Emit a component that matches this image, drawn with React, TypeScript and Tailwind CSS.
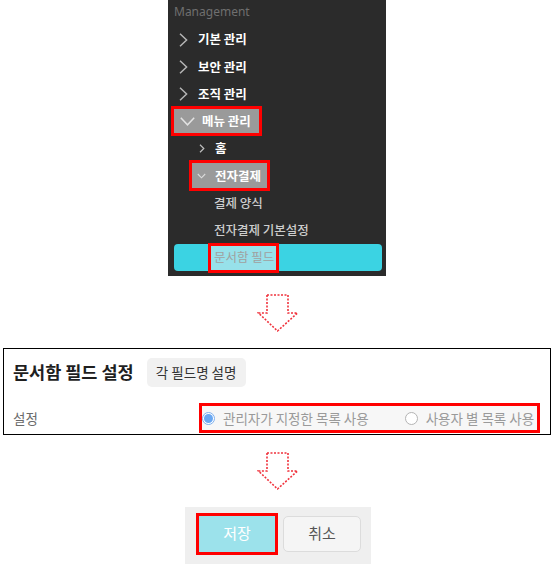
/*
 * 문서함 필드 설정 안내 — 메뉴 경로 → 설정 → 저장
 */

const KR = "font-['Noto_Sans_CJK_KR','Noto_Sans',sans-serif]";

function ChevRight({ small = false }: { small?: boolean }) {
  return small ? (
    <svg width="6" height="9" viewBox="0 0 6 9" className="block">
      <polyline points="1,0.8 4.8,4.5 1,8.2" fill="none" stroke="#bdbdbd" strokeWidth="1.2" />
    </svg>
  ) : (
    <svg width="9" height="14" viewBox="0 0 9 14" className="block">
      <polyline points="1,0.8 7.6,7 1,13.2" fill="none" stroke="#b5b5b5" strokeWidth="1.5" />
    </svg>
  );
}

function ChevDown({ small = false }: { small?: boolean }) {
  return small ? (
    <svg width="9" height="6" viewBox="0 0 9 6" className="block">
      <polyline points="0.8,1 4.5,4.8 8.2,1" fill="none" stroke="#dcdcdc" strokeWidth="1.1" />
    </svg>
  ) : (
    <svg width="15" height="9" viewBox="0 0 15 9" className="block">
      <polyline points="0.8,0.8 7.5,7.8 14.2,0.8" fill="none" stroke="#e2e2e2" strokeWidth="1.5" />
    </svg>
  );
}

function DownArrow() {
  return (
    <svg width="42" height="40" viewBox="0 0 42 40" className="block">
      <polygon
        points="10,2 31,2 31,20 40.5,20 20.5,38 1.5,20 10,20"
        fill="none"
        stroke="#f0323c"
        strokeWidth="1.6"
        strokeDasharray="2 1.5"
      />
    </svg>
  );
}

function Radio({ checked }: { checked: boolean }) {
  return checked ? (
    <span className="w-[13px] h-[13px] rounded-full border border-[#7fb0ee] bg-white flex items-center justify-center shrink-0">
      <span className="w-[9px] h-[9px] rounded-full bg-[#6aa8f2]" />
    </span>
  ) : (
    <span className="block w-[13px] h-[13px] rounded-full border border-[#b4b4b4] bg-white shrink-0" />
  );
}

export default function App() {
  const topItems = ["기본 관리", "보안 관리", "조직 관리"];

  return (
    <div className={`w-[553px] h-[564px] bg-white overflow-hidden flex flex-col ${KR}`}>
      {/* Sidebar */}
      <div className="ml-[168px] w-[218px] h-[276px] bg-[#2b2b2b] flex flex-col">
        <div className="h-[26px] flex items-center pl-[6px] pb-[3px] font-['Noto_Sans',sans-serif] text-[12px] text-[#6f6f6f]">
          Management
        </div>
        {topItems.map((label) => (
          <div key={label} className="h-[27.25px] flex items-center pl-[11px]">
            <ChevRight />
            <span className="ml-[10px] text-[12.5px] font-bold text-white">{label}</span>
          </div>
        ))}
        <div className="h-[27.25px] flex items-center pl-[3px]">
          <div className="h-[30px] w-[91px] border-[3px] border-[#ff0000] bg-[#9a9a9a] flex items-center pl-[6px]">
            <ChevDown />
            <span className="ml-[7px] text-[12.5px] font-bold text-white">메뉴 관리</span>
          </div>
        </div>
        <div className="h-[27.25px] flex items-center pl-[31px]">
          <ChevRight small />
          <span className="ml-[10px] text-[12.5px] font-bold text-white">홈</span>
        </div>
        <div className="h-[27.25px] flex items-center pl-[21px]">
          <div className="h-[31px] w-[81px] border-[3px] border-[#ff0000] bg-[#9a9a9a] flex items-center pl-[5px]">
            <ChevDown small />
            <span className="ml-[9px] text-[12.5px] font-bold text-white">전자결제</span>
          </div>
        </div>
        <div className="h-[27.25px] flex items-center pl-[46px]">
          <span className="text-[12.5px] font-medium text-[#cdcdcd]">결제 양식</span>
        </div>
        <div className="h-[27.25px] flex items-center pl-[46px]">
          <span className="text-[12.5px] font-medium text-[#cdcdcd]">전자결제 기본설정</span>
        </div>
        <div className="h-[27px] ml-[6px] mr-[4px] rounded-[4px] bg-[#3bd3e3] flex items-center">
          <div className="ml-[34px] h-[30px] w-[71px] border-[3px] border-[#ff0000] bg-[#97e1ea] flex items-center pl-[3px]">
            <span className="text-[12.5px] text-[#a0a0a0]">문서함 필드</span>
          </div>
        </div>
      </div>

      <div className="ml-[257px] mt-[17px]">
        <DownArrow />
      </div>

      {/* Settings panel */}
      <div className="ml-[3px] mt-[15px] w-[548px] h-[87px] border border-black flex flex-col">
        <div className="mt-[9px] pl-[9px] flex items-center">
          <span className="text-[17.5px] font-bold text-[#1f1f1f]">문서함 필드 설정</span>
          <button className="ml-[13px] h-[29px] w-[99px] rounded-[5px] bg-[#f1f1f1] text-[13.5px] text-[#333]">
            각 필드명 설명
          </button>
        </div>
        <div className="mt-[16px] pl-[9px] pr-[10px] flex items-center">
          <span className="text-[13.5px] text-[#6b6b6b]">설정</span>
          <div className="ml-auto h-[30px] w-[341px] border-[3px] border-[#ff0000] bg-[#f7f7f7] flex items-center">
            <Radio checked />
            <span className="ml-[8px] text-[13.5px] text-[#9a9a9a]">관리자가 지정한 목록 사용</span>
            <span className="ml-[36px]">
              <Radio checked={false} />
            </span>
            <span className="ml-[8px] text-[13.5px] text-[#9a9a9a]">사용자 별 목록 사용</span>
          </div>
        </div>
      </div>

      <div className="ml-[257px] mt-[16px]">
        <DownArrow />
      </div>

      {/* Buttons */}
      <div className="ml-[185px] mt-[16px] w-[186px] h-[57px] bg-[#efefef] flex items-center pl-[11px] pb-[4px]">
        <button className="h-[42px] w-[82px] border-[3px] border-[#ff0000] bg-[#9ce2eb] text-[15px] text-white">
          저장
        </button>
        <button className="ml-[5px] h-[36px] w-[78px] rounded-[5px] border border-[#dcdcdc] bg-[#f5f5f5] text-[15px] text-[#555]">
          취소
        </button>
      </div>
    </div>
  );
}
